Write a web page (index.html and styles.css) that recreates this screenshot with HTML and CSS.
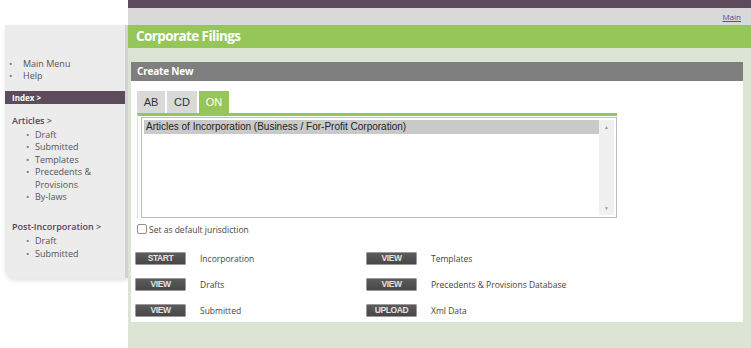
FILE: index.html
```html
<!DOCTYPE html>
<html lang="en">
<head>
<meta charset="utf-8">
<title>Corporate Filings</title>
<link rel="stylesheet" href="styles.css">
</head>
<body>
<div class="page">
  <aside class="sidebar">
    <ul class="menu top-menu">
      <li>Main Menu</li>
      <li>Help</li>
    </ul>
    <div class="index-bar">Index &gt;</div>
    <div class="group">
      <div class="group-title">Articles &gt;</div>
      <ul class="menu sub">
        <li>Draft</li>
        <li>Submitted</li>
        <li>Templates</li>
        <li>Precedents &amp;<br>Provisions</li>
        <li>By-laws</li>
      </ul>
    </div>
    <div class="group group-2">
      <div class="group-title">Post-Incorporation &gt;</div>
      <ul class="menu sub">
        <li>Draft</li>
        <li>Submitted</li>
      </ul>
    </div>
  </aside>
  <main class="main">
    <div class="topbar"></div>
    <div class="subbar"><a href="#" class="main-link">Main</a></div>
    <h1 class="title">Corporate Filings</h1>
    <div class="content">
      <section class="panel">
        <div class="panel-head">Create New</div>
        <div class="panel-body">
          <div class="tabs">
            <span class="tab">AB</span>
            <span class="tab">CD</span>
            <span class="tab active">ON</span>
          </div>
          <div class="tab-content">
            <div class="listbox">
              <div class="options">
                <div class="option selected">Articles of Incorporation (Business / For-Profit Corporation)</div>
              </div>
              <div class="scrollbar">
                <span class="arrow">&#9650;</span>
                <span class="arrow">&#9660;</span>
              </div>
            </div>
          </div>
          <label class="check"><span class="box"></span>Set as default jurisdiction</label>
          <div class="actions">
            <div class="action"><span class="btn">START</span><span class="label">Incorporation</span></div>
            <div class="action"><span class="btn">VIEW</span><span class="label">Templates</span></div>
            <div class="action"><span class="btn">VIEW</span><span class="label">Drafts</span></div>
            <div class="action"><span class="btn">VIEW</span><span class="label">Precedents &amp; Provisions Database</span></div>
            <div class="action"><span class="btn">VIEW</span><span class="label">Submitted</span></div>
            <div class="action"><span class="btn">UPLOAD</span><span class="label">Xml Data</span></div>
          </div>
        </div>
      </section>
    </div>
  </main>
</div>
</body>
</html>
```
FILE: styles.css
```css
* { box-sizing: border-box; }
html, body { margin: 0; padding: 0; }
body {
  background: #ffffff;
  font-family: "Open Sans", "Noto Sans", sans-serif;
  color: #444;
  width: 751px;
  height: 348px;
  overflow: hidden;
}
.page {
  display: flex;
  align-items: flex-start;
  height: 348px;
}
.sidebar {
  width: 123px;
  margin: 25px 0 0 5px;
  height: 253px;
  background: #ececec;
  border-right: 3px solid #d2d2d2;
  border-bottom-left-radius: 11px;
  box-shadow: 0 3px 4px rgba(0,0,0,0.10);
  padding: 33px 0 0 0;
  font-size: 9px;
  color: #555;
}
.menu { list-style: none; margin: 0; padding: 0; }
.menu li { display: flex; line-height: 12px; }
.menu li::before { content: "\2022"; flex: 0 0 auto; color: #777; }
.top-menu { padding-left: 4px; }
.top-menu li::before { width: 14px; }
.index-bar {
  margin-top: 9px;
  height: 13px;
  line-height: 13px;
  background: #5d4a5b;
  color: #fff;
  font-weight: bold;
  font-size: 8px;
  padding-left: 7px;
}
.group { margin-top: 11px; }
.group-2 { margin-top: 18px; }
.group-title {
  padding-left: 7px;
  line-height: 12px;
  color: #5a3f5c;
  font-weight: 600;
}
.sub { padding-left: 21px; margin-top: 2px; }
.sub li { line-height: 12.4px; }
.sub li::before { width: 9px; }
.main {
  flex: 1;
  height: 348px;
  display: flex;
  flex-direction: column;
}
.topbar { height: 8px; background: #5d4a5b; }
.subbar {
  height: 17px;
  background: #d9d9d9;
  display: flex;
  justify-content: flex-end;
  align-items: center;
  padding-right: 10px;
}
.main-link { font-size: 8px; color: #3a55a8; text-decoration: underline; }
.title {
  margin: 0;
  height: 23px;
  line-height: 23px;
  background: #96c65a;
  color: #fff;
  font-size: 13.5px;
  font-weight: bold;
  letter-spacing: -0.6px;
  padding-left: 8px;
}
.content {
  flex: 1;
  background: #dce5d3;
  padding: 14px 8px 0 3px;
}
.panel { background: #fff; }
.panel-head {
  height: 19px;
  line-height: 19px;
  background: #7f7f7f;
  color: #fff;
  font-weight: bold;
  font-size: 10px;
  letter-spacing: -0.2px;
  padding-left: 6px;
}
.panel-body { padding: 10px 6px 6px 6px; }
.tabs { display: flex; gap: 2px; }
.tab {
  width: 28px;
  height: 22px;
  line-height: 22px;
  text-align: center;
  background: #d9d9d9;
  font-family: "Liberation Sans", Arial, sans-serif;
  font-size: 11px;
  color: #333;
}
.tab + .tab { width: 30px; }
.tab.active { background: #96c65a; color: #fff; }
.tab-content {
  width: 480px;
  border-top: 3px solid #96c65a;
  border-left: 1px solid #d6e8c2;
  padding: 1px 0 0 3px;
}
.listbox {
  height: 101px;
  border: 1px solid #b8bcc4;
  display: flex;
  padding: 2px;
}
.options { flex: 1; }
.option {
  height: 14px;
  line-height: 14px;
  padding-left: 2px;
  font-family: "Liberation Sans", Arial, sans-serif;
  font-size: 10px;
  color: #222;
}
.option.selected { background: #c9c9c9; }
.scrollbar {
  width: 15px;
  background: #f0f0f0;
  display: flex;
  flex-direction: column;
  justify-content: space-between;
  align-items: center;
  font-size: 5px;
  color: #999;
  padding: 4px 0;
}
.check {
  display: flex;
  align-items: center;
  margin-top: 6px;
  font-size: 8.5px;
  color: #444;
  height: 10px;
}
.box {
  width: 10px;
  height: 10px;
  border: 1px solid #8f8f8f;
  border-radius: 2px;
  margin-right: 2px;
  background: #fff;
}
.actions {
  margin-top: 18px;
  margin-left: -2px;
  display: grid;
  grid-template-columns: 231px 1fr;
  row-gap: 14px;
}
.action { display: flex; align-items: center; height: 12px; }
.btn {
  width: 51px;
  height: 13px;
  line-height: 11px;
  text-align: center;
  background: linear-gradient(#5c5c5c, #474747);
  border: 1px solid #9a9a9a;
  border-radius: 1px;
  color: #e2e2e2;
  font-family: "Liberation Sans", Arial, sans-serif;
  font-weight: bold;
  font-size: 8.5px;
  letter-spacing: -0.4px;
}
.label { margin-left: 14px; font-size: 8.5px; color: #444; }
```
